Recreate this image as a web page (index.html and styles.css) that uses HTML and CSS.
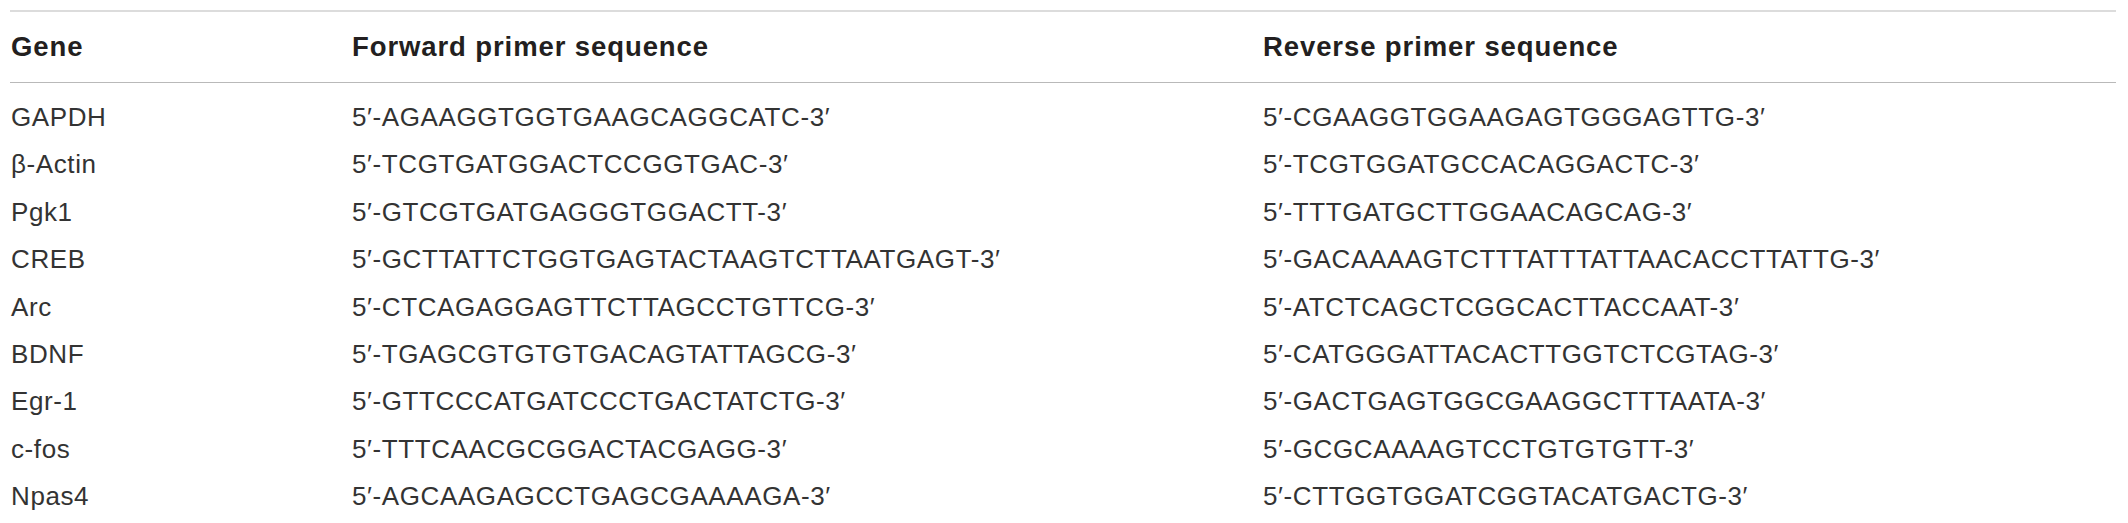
FILE: index.html
```html
<!DOCTYPE html>
<html lang="en">
<head>
<meta charset="utf-8">
<title>Primer sequences</title>
<link rel="stylesheet" href="styles.css">
</head>
<body>
<table class="primers">
  <colgroup>
    <col class="col-gene">
    <col class="col-fwd">
    <col class="col-rev">
  </colgroup>
  <thead>
    <tr>
      <th>Gene</th>
      <th>Forward primer sequence</th>
      <th>Reverse primer sequence</th>
    </tr>
  </thead>
  <tbody>
    <tr class="first"><td>GAPDH</td><td>5′-AGAAGGTGGTGAAGCAGGCATC-3′</td><td>5′-CGAAGGTGGAAGAGTGGGAGTTG-3′</td></tr>
    <tr><td>β-Actin</td><td>5′-TCGTGATGGACTCCGGTGAC-3′</td><td>5′-TCGTGGATGCCACAGGACTC-3′</td></tr>
    <tr><td>Pgk1</td><td>5′-GTCGTGATGAGGGTGGACTT-3′</td><td>5′-TTTGATGCTTGGAACAGCAG-3′</td></tr>
    <tr><td>CREB</td><td>5′-GCTTATTCTGGTGAGTACTAAGTCTTAATGAGT-3′</td><td>5′-GACAAAAGTCTTTATTTATTAACACCTTATTG-3′</td></tr>
    <tr><td>Arc</td><td>5′-CTCAGAGGAGTTCTTAGCCTGTTCG-3′</td><td>5′-ATCTCAGCTCGGCACTTACCAAT-3′</td></tr>
    <tr><td>BDNF</td><td>5′-TGAGCGTGTGTGACAGTATTAGCG-3′</td><td>5′-CATGGGATTACACTTGGTCTCGTAG-3′</td></tr>
    <tr><td>Egr-1</td><td>5′-GTTCCCATGATCCCTGACTATCTG-3′</td><td>5′-GACTGAGTGGCGAAGGCTTTAATA-3′</td></tr>
    <tr><td>c-fos</td><td>5′-TTTCAACGCGGACTACGAGG-3′</td><td>5′-GCGCAAAAGTCCTGTGTGTT-3′</td></tr>
    <tr><td>Npas4</td><td>5′-AGCAAGAGCCTGAGCGAAAAGA-3′</td><td>5′-CTTGGTGGATCGGTACATGACTG-3′</td></tr>
  </tbody>
</table>
</body>
</html>
```
FILE: styles.css
```css
html, body {
  margin: 0;
  padding: 0;
  background: #ffffff;
}

body {
  padding: 10px 12px 0 10px;
  font-family: "Liberation Sans", Arial, sans-serif;
  color: #231f20;
}

.primers {
  width: 2106px;
  border-collapse: collapse;
  table-layout: fixed;
  border-top: 2px solid #dcdcdc;
}

.col-gene { width: 341px; }
.col-fwd { width: 911px; }
.col-rev { width: auto; }

.primers th {
  text-align: left;
  font-weight: bold;
  font-size: 27.5px;
  letter-spacing: 0.9px;
  height: 70px;
  padding: 0 0 0 1px;
  vertical-align: middle;
  border-bottom: 1px solid #b9b9b9;
  color: #231f20;
}

.primers td {
  font-size: 26px;
  letter-spacing: 0.6px;
  height: 47.4px;
  line-height: 47.4px;
  padding: 0 0 0 1px;
  vertical-align: middle;
  white-space: nowrap;
  color: #333333;
}

.primers tr.first td {
  padding-top: 11px;
  height: 47.4px;
}
```
